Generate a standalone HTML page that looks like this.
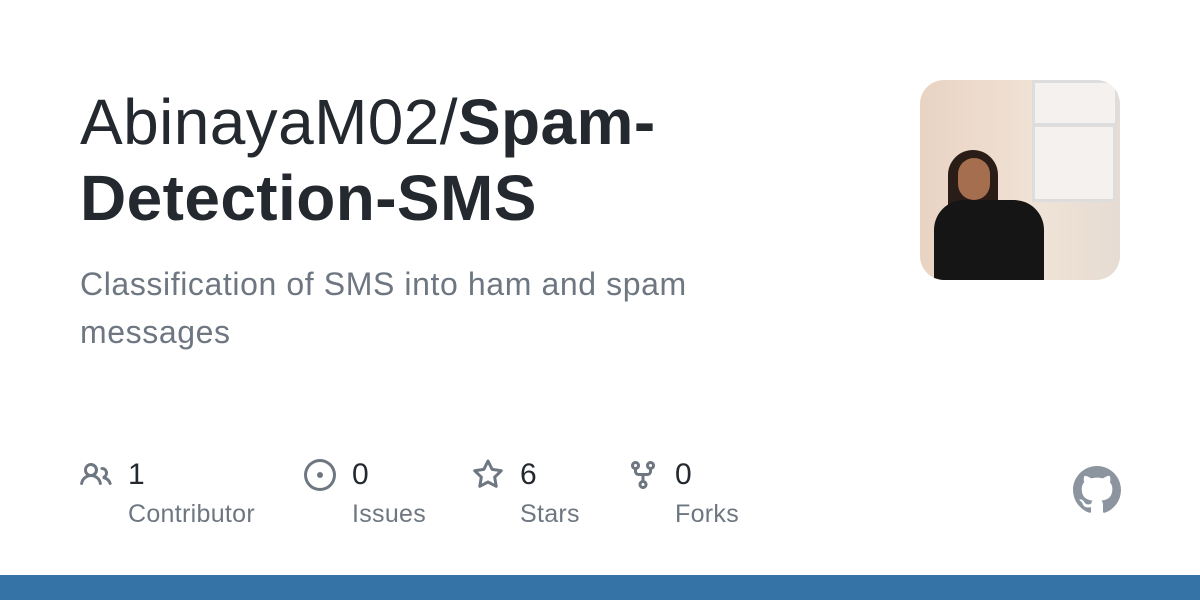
<!DOCTYPE html>
<html><head><meta charset="utf-8"><style>
body{margin:0;width:1200px;height:600px;background:#fff;font-family:"Liberation Sans",sans-serif;position:relative;overflow:hidden}
.t{position:absolute;left:80px;top:84px;font-size:64px;line-height:76px;color:#24292f;letter-spacing:0.4px}
.d{position:absolute;left:80px;top:260px;font-size:32px;line-height:48px;color:#6e7781;letter-spacing:0.6px}
.av{position:absolute;left:920px;top:80px;width:200px;height:200px;border-radius:24px;background:linear-gradient(90deg,#e9d3c3,#f0e2d6 60%,#e6dcd3);overflow:hidden}
.s{position:absolute;top:455px}
.n{font-size:30px;color:#24292f;position:absolute;left:48px;top:0;line-height:40px}
.l{font-size:25px;color:#6e7781;position:absolute;left:48px;top:45px;white-space:nowrap;letter-spacing:0.3px}
.bar{position:absolute;left:0;bottom:0;width:1200px;height:25px;background:#3572a5}
</style></head><body>
<div class="t">AbinayaM02/<b>Spam-<br>Detection-SMS</b></div>
<div class="d">Classification of SMS into ham and spam<br>messages</div>
<div class="av">
<div style="position:absolute;left:112px;top:0;width:80px;height:40px;border:3px solid #ddd;background:#f4f1ee"></div>
<div style="position:absolute;left:112px;top:44px;width:78px;height:72px;border:3px solid #ddd;background:#f4f1ee"></div>
<div style="position:absolute;left:28px;top:70px;width:50px;height:70px;border-radius:25px 25px 10px 10px;background:#2a1d18"></div>
<div style="position:absolute;left:38px;top:78px;width:32px;height:42px;border-radius:16px;background:#a56e4e"></div>
<div style="position:absolute;left:14px;top:120px;width:110px;height:90px;border-radius:30px 30px 0 0;background:#151515"></div>
</div>
<div class="s" style="left:80px"><svg width="32" height="32" viewBox="0 0 16 16" fill="#6e7781" style="position:absolute;top:4px"><path d="M2 5.5a3.5 3.5 0 1 1 5.898 2.549 5.508 5.508 0 0 1 3.034 4.084.75.75 0 1 1-1.482.235 4 4 0 0 0-7.9 0 .75.75 0 0 1-1.482-.236A5.507 5.507 0 0 1 3.102 8.05 3.493 3.493 0 0 1 2 5.5ZM11 4a3.001 3.001 0 0 1 2.22 5.018 5.01 5.01 0 0 1 2.56 3.012.749.749 0 0 1-.885.954.752.752 0 0 1-.549-.514 3.507 3.507 0 0 0-2.522-2.372.75.75 0 0 1-.574-.73v-.352a.75.75 0 0 1 .416-.672A1.5 1.5 0 0 0 11 5.5.75.75 0 0 1 11 4Zm-5.5-.5a2 2 0 1 0-.001 3.999A2 2 0 0 0 5.5 3.5Z"/></svg><div class="n">1</div><div class="l">Contributor</div></div>
<div class="s" style="left:304px"><svg width="32" height="32" viewBox="0 0 16 16" fill="#6e7781" style="position:absolute;top:4px"><path d="M8 9.5a1.5 1.5 0 1 0 0-3 1.5 1.5 0 0 0 0 3Z"/><path d="M8 0a8 8 0 1 1 0 16A8 8 0 0 1 8 0ZM1.5 8a6.5 6.5 0 1 0 13 0 6.5 6.5 0 0 0-13 0Z"/></svg><div class="n">0</div><div class="l">Issues</div></div>
<div class="s" style="left:472px"><svg width="32" height="32" viewBox="0 0 16 16" fill="#6e7781" style="position:absolute;top:4px"><path d="M8 .25a.75.75 0 0 1 .673.418l1.882 3.815 4.21.612a.75.75 0 0 1 .416 1.279l-3.046 2.97.719 4.192a.751.751 0 0 1-1.088.791L8 12.347l-3.766 1.98a.75.75 0 0 1-1.088-.79l.72-4.194L.818 6.374a.75.75 0 0 1 .416-1.28l4.21-.611L7.327.668A.75.75 0 0 1 8 .25Zm0 2.445L6.615 5.5a.75.75 0 0 1-.564.41l-3.097.45 2.24 2.184a.75.75 0 0 1 .216.664l-.528 3.084 2.769-1.456a.75.75 0 0 1 .698 0l2.77 1.456-.53-3.084a.75.75 0 0 1 .216-.664l2.24-2.183-3.096-.45a.75.75 0 0 1-.564-.41L8 2.694Z"/></svg><div class="n">6</div><div class="l">Stars</div></div>
<div class="s" style="left:627px"><svg width="32" height="32" viewBox="0 0 16 16" fill="#6e7781" style="position:absolute;top:4px"><path d="M5 5.372v.878c0 .414.336.75.75.75h4.5a.75.75 0 0 0 .75-.75v-.878a2.25 2.25 0 1 1 1.5 0v.878a2.25 2.25 0 0 1-2.25 2.25h-1.5v2.128a2.251 2.251 0 1 1-1.5 0V8.5h-1.5A2.25 2.25 0 0 1 3.5 6.25v-.878a2.25 2.25 0 1 1 1.5 0ZM5 3.25a.75.75 0 1 0-1.5 0 .75.75 0 0 0 1.5 0Zm6.75.75a.75.75 0 1 0 0-1.5.75.75 0 0 0 0 1.5Zm-3 8.75a.75.75 0 1 0-1.5 0 .75.75 0 0 0 1.5 0Z"/></svg><div class="n">0</div><div class="l">Forks</div></div>
<svg width="48" height="48" viewBox="0 0 16 16" fill="#8c959f" style="position:absolute;left:1073px;top:466px"><path d="M8 0c4.42 0 8 3.58 8 8a8.013 8.013 0 0 1-5.45 7.59c-.4.08-.55-.17-.55-.38 0-.27.01-1.13.01-2.2 0-.75-.25-1.23-.54-1.48 1.78-.2 3.65-.88 3.65-3.95 0-.88-.31-1.59-.82-2.15.08-.2.36-1.02-.08-2.12 0 0-.67-.22-2.2.82-.64-.18-1.32-.27-2-.27-.68 0-1.36.09-2 .27-1.53-1.03-2.2-.82-2.2-.82-.44 1.1-.16 1.92-.08 2.12-.51.56-.82 1.28-.82 2.15 0 3.06 1.86 3.75 3.64 3.95-.23.2-.44.55-.51 1.07-.46.21-1.61.55-2.33-.66-.15-.24-.6-.83-1.23-.82-.67.01-.27.38.01.53.34.19.73.9.82 1.13.16.45.68 1.31 2.69.94 0 .67.01 1.3.01 1.49 0 .21-.15.45-.55.38A7.995 7.995 0 0 1 0 8c0-4.42 3.58-8 8-8Z"/></svg>
<div class="bar"></div>
</body></html>
